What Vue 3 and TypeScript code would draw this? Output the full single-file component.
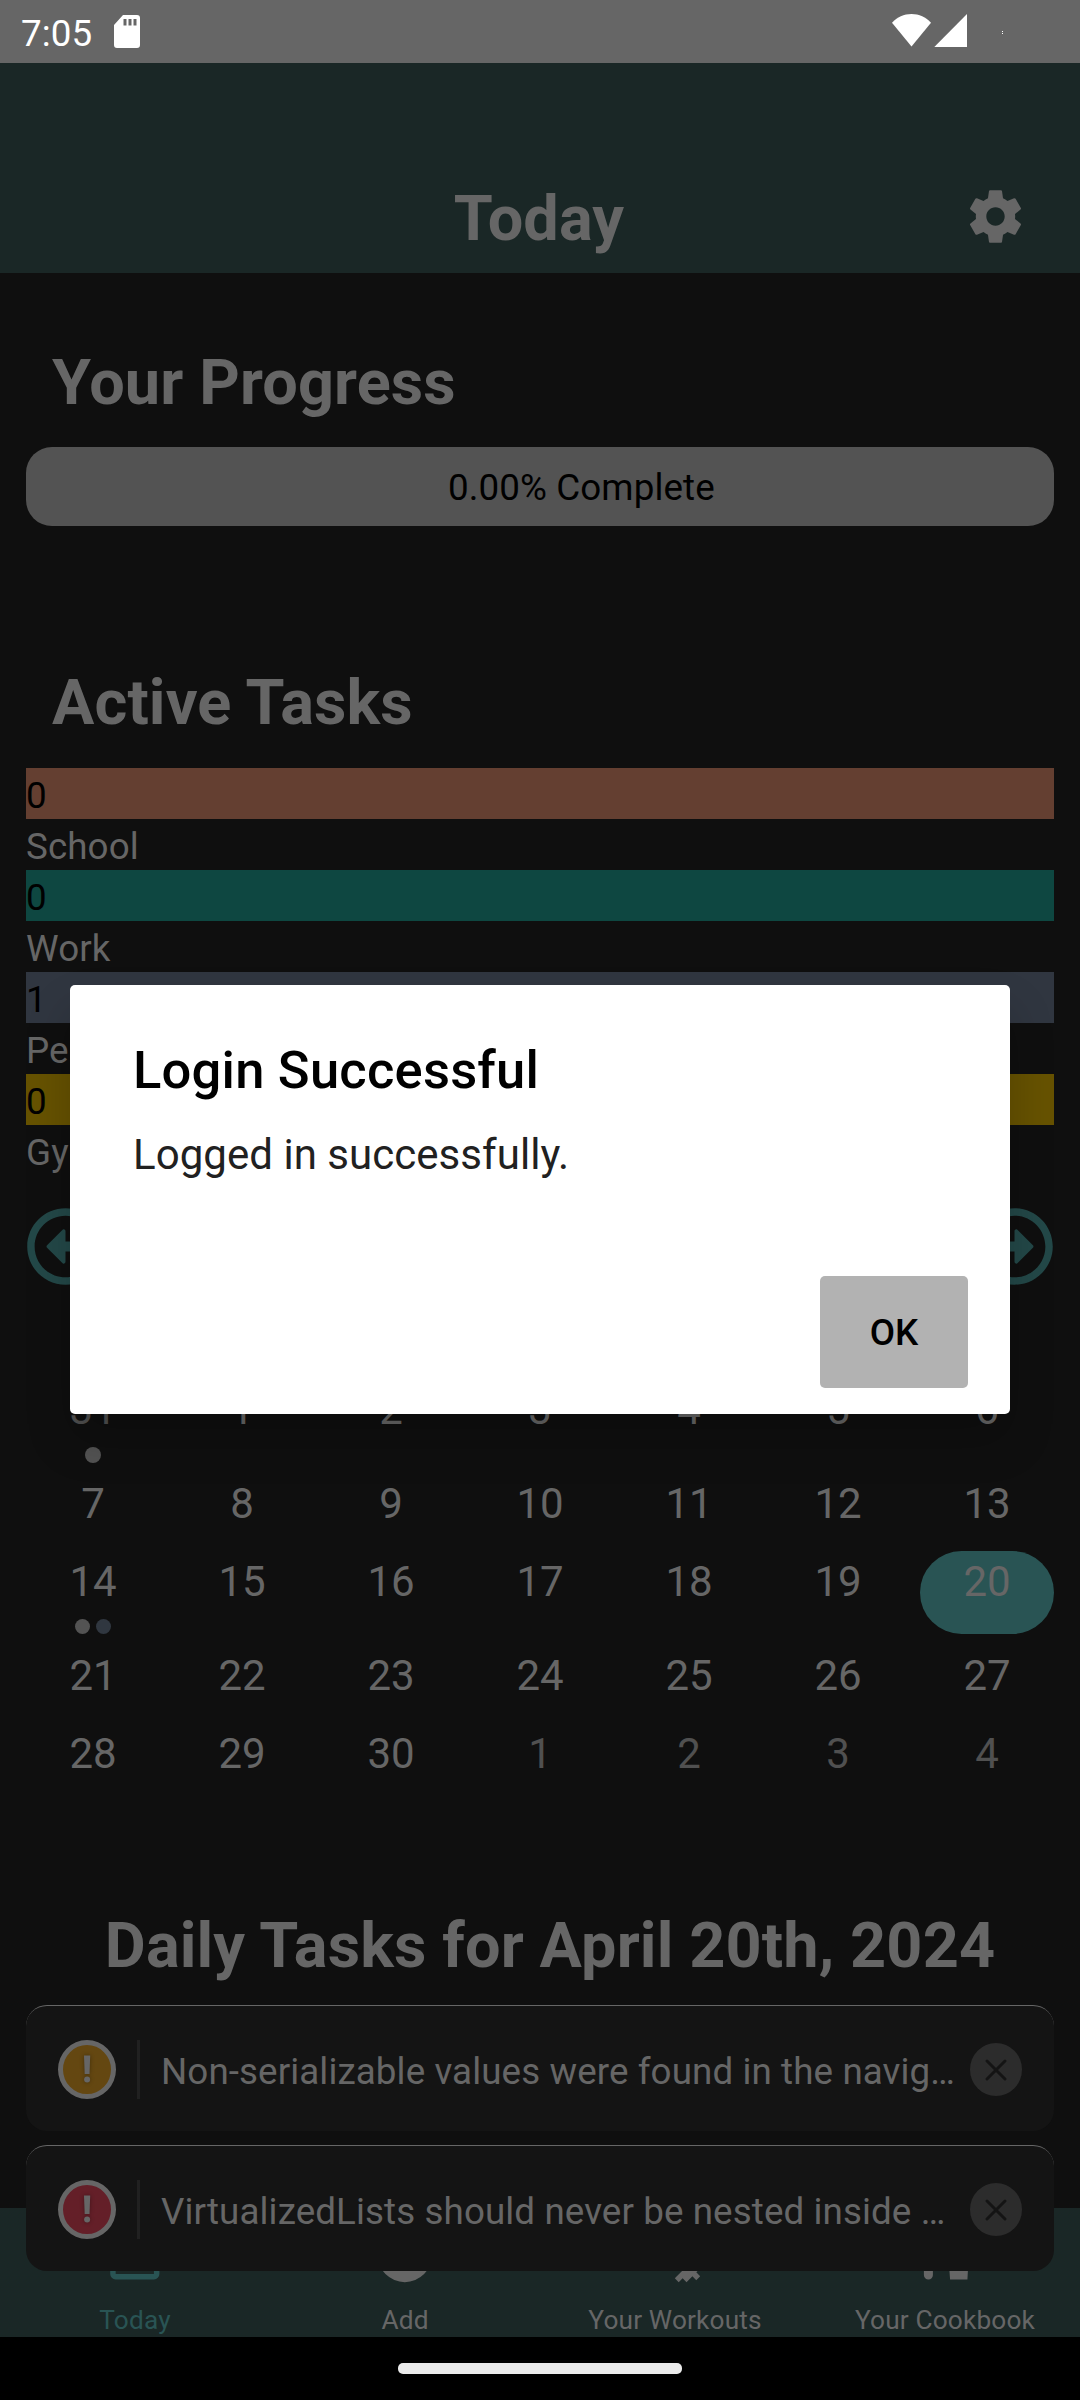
<script setup lang="ts">
interface Category {
  name: string
  count: number
  color: string
}

interface Day {
  label: number
  dots?: string[]
  selected?: boolean
  outside?: boolean
}

interface Toast {
  level: 'warning' | 'error'
  text: string
}

interface Tab {
  label: string
  path: string
  active?: boolean
}

const categories: Category[] = [
  { name: 'School', count: 0, color: '#643f31' },
  { name: 'Work', count: 0, color: '#0e4741' },
  { name: 'Personal', count: 1, color: '#303640' },
  { name: 'Gym', count: 0, color: '#665200' },
]

const range = (from: number, to: number): Day[] =>
  Array.from({ length: to - from + 1 }, (_, i) => ({ label: from + i }))

const grey = '#535353'
const slate = '#303740'

const weeks: Day[][] = [
  [{ label: 31, dots: [grey], outside: true }, ...range(1, 6)],
  range(7, 13),
  [{ label: 14, dots: [grey, slate] }, ...range(15, 19), { label: 20, selected: true }],
  range(21, 27),
  [...range(28, 30), ...range(1, 4).map((d) => ({ ...d, outside: true }))],
]

const toasts: Toast[] = [
  { level: 'warning', text: 'Non-serializable values were found in the navig…' },
  { level: 'error', text: 'VirtualizedLists should never be nested inside …' },
]

const tabs: Tab[] = [
  {
    label: 'Today',
    active: true,
    path: 'M7 10h5v5H7zM19 19H5V8h14zM19 3h-1V1h-2v2H8V1H6v2H5a2 2 0 0 0-2 2v14a2 2 0 0 0 2 2h14a2 2 0 0 0 2-2V5a2 2 0 0 0-2-2z',
  },
  {
    label: 'Add',
    path: 'M17 13h-4v4h-2v-4H7v-2h4V7h2v4h4zM12 2a10 10 0 1 0 0 20 10 10 0 0 0 0-20z',
  },
  {
    label: 'Your Workouts',
    path: 'M20.57 14.86L22 13.43 20.57 12 17 15.57 8.43 7 12 3.43 10.57 2 9.14 3.43 7.71 2 5.57 4.14 4.14 2.71 2.71 4.14l1.43 1.43L2 7.71l1.43 1.43L2 10.57 3.43 12 7 8.43 15.57 17 12 20.57 13.43 22l1.43-1.43L16.29 22l2.14-2.14 1.43 1.43 1.43-1.43-1.43-1.43L22 16.29z',
  },
  {
    label: 'Your Cookbook',
    path: 'M6 3a3 4 0 0 0-1.65 7.3v9.1a1.65 1.65 0 0 0 3.3 0v-9.1A3 4 0 0 0 6 3zM13 8h8l-.72 13h-6.35z',
  },
]

const arrowPath =
  'M8 256c0 137 111 248 248 248s248-111 248-248S393 8 256 8 8 119 8 256zm448 0c0 110.5-89.5 200-200 200S56 366.5 56 256 145.5 56 256 56s200 89.5 200 200zm-72-20v40c0 6.6-5.4 12-12 12H256v67c0 10.7-12.9 16-20.5 8.5l-99-99c-4.7-4.7-4.7-12.3 0-17l99-99c7.6-7.6 20.5-2.2 20.5 8.5v67h116c6.6 0 12 5.4 12 12z'
</script>

<template>
  <div class="screen">
    <div class="status">
      <span class="clock">7:05</span>
      <svg class="sd" width="26" height="33" viewBox="0 0 26 33">
        <path
          fill="#fff"
          fill-rule="evenodd"
          d="M9 0h14a3 3 0 0 1 3 3v27a3 3 0 0 1-3 3H3a3 3 0 0 1-3-3V10zM9.5 4v6.500h3V4zM14.500 4v6.500h3V4zM19.500 4v6.500h3V4z"
        />
      </svg>
      <svg class="signals" width="112" height="33" viewBox="0 0 112 33">
        <path fill="#fff" d="M0 8.800C5 3 12 0 19.500 0S34 3 39 8.800L19.500 32.600z" />
        <path fill="#fff" d="M75 0v33H42.300z" />
        <path fill="#fff" d="M110 17h1v1h-1zM110 19h1v1h-1z" />
      </svg>
    </div>

    <header class="header">
      <h1>Today</h1>
      <svg class="gear" width="63" height="63" viewBox="0 0 24 24">
        <path
          fill="#666"
          d="M19.430 12.980c.04-.32.07-.64.07-.98s-.03-.66-.07-.98l2.110-1.650c.19-.15.24-.42.12-.64l-2-3.460c-.12-.22-.39-.3-.61-.22l-2.490 1c-.52-.4-1.080-.73-1.690-.98l-.38-2.650C14.460 2.180 14.250 2 14 2h-4c-.25 0-.46.18-.49.42l-.38 2.650c-.61.25-1.170.59-1.690.98l-2.490-1c-.23-.09-.49 0-.61.22l-2 3.460c-.13.22-.07.49.12.64l2.110 1.650c-.04.32-.07.65-.07.98s.03.66.07.98l-2.110 1.650c-.19.15-.24.42-.12.64l2 3.460c.12.22.39.3.61.22l2.490-1c.52.4 1.080.73 1.690.98l.38 2.650c.03.24.24.42.49.42h4c.25 0 .46-.18.49-.42l.38-2.650c.61-.25 1.170-.59 1.690-.98l2.490 1c.23.09.49 0 .61-.22l2-3.460c.12-.22.07-.49-.12-.64l-2.110-1.650zM12 15.500c-1.930 0-3.500-1.570-3.500-3.500s1.570-3.500 3.500-3.500 3.500 1.570 3.500 3.500-1.570 3.500-3.500 3.500z"
        />
      </svg>
    </header>

    <main class="content">
      <h2>Your Progress</h2>
      <div class="progress">0.00% Complete</div>

      <h2 class="active-title">Active Tasks</h2>
      <div class="categories">
        <template v-for="c in categories" :key="c.name">
          <div class="line count" :style="{ background: c.color }">{{ c.count }}</div>
          <div class="line name">{{ c.name }}</div>
        </template>
      </div>

      <div class="month">
        <svg width="79" height="79" viewBox="0 0 512 512"><path :d="arrowPath" fill="#234848" /></svg>
        <svg class="flip" width="79" height="79" viewBox="0 0 512 512"><path :d="arrowPath" fill="#234848" /></svg>
      </div>

      <div class="calendar">
        <div v-for="(week, w) in weeks" :key="w" class="week">
          <div
            v-for="day in week"
            :key="day.label"
            class="day"
            :class="{ selected: day.selected, outside: day.outside }"
          >
            <span>{{ day.label }}</span>
            <div v-if="day.dots" class="dots">
              <i v-for="dot in day.dots" :key="dot" :style="{ background: dot }"></i>
            </div>
          </div>
        </div>
      </div>

      <h2 class="daily-title">Daily Tasks for April 20th, 2024</h2>
    </main>

    <nav class="tabs">
      <div v-for="tab in tabs" :key="tab.label" class="tab" :class="{ on: tab.active }">
        <svg width="65.600" height="65.600" viewBox="0 0 24 24">
          <path :d="tab.path" fill="currentColor" fill-rule="evenodd" />
        </svg>
        <span>{{ tab.label }}</span>
      </div>
    </nav>
    <div class="gesture"><div class="handle"></div></div>

    <div class="toasts">
      <div v-for="t in toasts" :key="t.level" class="toast">
        <div class="badge" :class="t.level">
          <svg width="48" height="49" viewBox="0 0 48 49">
            <path fill="#666" d="M21 10.500h6.200l-.7 18.500h-4.800z" />
            <circle cx="24.100" cy="34.600" r="3" fill="#666" />
          </svg>
        </div>
        <div class="rule"></div>
        <div class="message">{{ t.text }}</div>
        <div class="close">
          <svg width="24" height="24" viewBox="0 0 24 24">
            <path d="M3 3l18 18M21 3L3 21" stroke="#141414" stroke-width="3" stroke-linecap="round" />
          </svg>
        </div>
      </div>
    </div>

    <div class="overlay">
      <div class="dialog" role="dialog">
        <div class="dialog-title">Login Successful</div>
        <div class="dialog-text">Logged in successfully.</div>
        <div class="actions"><button type="button">OK</button></div>
      </div>
    </div>
  </div>
</template>

<style>
body {
  background: #0f0f0f;
}
</style>

<style scoped>
.screen {
  position: relative;
  display: flex;
  flex-direction: column;
  width: 1080px;
  height: 2400px;
  overflow: hidden;
  background: #0f0f0f;
  color: #666;
  font-family: Roboto, 'Liberation Sans', sans-serif;
  font-size: 36.75px;
  letter-spacing: 0.1px;
}
.screen * {
  box-sizing: border-box;
}
svg {
  display: block;
  flex: none;
}
h1,
h2 {
  margin: 0;
  font-size: 63px;
  font-weight: 700;
  letter-spacing: 0.13px;
  line-height: 74px;
  white-space: nowrap;
}
.status {
  display: flex;
  flex: none;
  align-items: flex-start;
  height: 63px;
  padding: 0 76px 0 21px;
  background: #666;
  color: #fff;
}
.clock {
  width: 93px;
  line-height: 67px;
}
.sd {
  margin-top: 15px;
}
.signals {
  margin: 14px 0 0 auto;
}
.header {
  display: grid;
  grid-template-columns: 1fr auto 1fr;
  flex: none;
  height: 210px;
  padding: 0 53px;
  background: #1a2726;
}
.header h1 {
  grid-column: 2;
  margin: 119px 2px 0 0;
}
.gear {
  justify-self: end;
  margin-top: 122px;
}
.content {
  flex: none;
  height: 1935px;
  padding: 73px 26px 0;
}
.content h2 {
  padding-left: 26px;
}
.progress {
  height: 79px;
  margin-top: 27px;
  padding-left: 422px;
  border-radius: 26px;
  background: #535353;
  color: #000;
  line-height: 81px;
}
.content .active-title {
  margin-top: 140px;
}
.categories {
  margin-top: 28px;
}
.line {
  height: 51px;
  line-height: 55px;
}
.count {
  color: #000;
}
.month {
  display: flex;
  justify-content: space-between;
  margin-top: 31px;
}
.flip {
  transform: scaleX(-1);
}
.calendar {
  display: flex;
  flex-direction: column;
  gap: 11px;
  height: 422px;
  margin-top: 93px;
}
.week {
  display: flex;
  justify-content: space-between;
}
.day {
  width: 134px;
  min-height: 67px;
  font-size: 42px;
  letter-spacing: 0;
  line-height: 61px;
  text-align: center;
}
.day span {
  display: block;
  height: 67px;
}
.outside {
  color: #505050;
}
.selected {
  border-radius: 42px;
  background: #295454;
}
.dots {
  display: flex;
  align-items: flex-end;
  justify-content: center;
  gap: 6px;
  height: 16px;
}
.dots i {
  width: 15px;
  height: 15px;
  border-radius: 50%;
}
.dots i:only-child {
  width: 16px;
  height: 16px;
  transform: translateY(1px);
}
.content .daily-title {
  margin-top: 108px;
  padding: 0 0 0 20px;
  text-align: center;
}
.tabs {
  display: flex;
  flex: none;
  height: 129px;
  background: #1a2726;
}
.tab {
  display: flex;
  flex: 1 1 0;
  flex-direction: column;
  align-items: center;
  padding-top: 13.6px;
  font-size: 26.25px;
  letter-spacing: 0.15px;
}
.tab span {
  margin-top: 17px;
  line-height: 32px;
}
.tab.on {
  color: #295454;
}
.gesture {
  display: flex;
  flex: 1;
  justify-content: center;
  padding-top: 26px;
  background: #000;
}
.handle {
  width: 284px;
  height: 11px;
  border-radius: 5px;
  background: #ebebeb;
}
.toasts {
  position: absolute;
  right: 26px;
  bottom: 129px;
  left: 26px;
  display: flex;
  flex-direction: column;
  gap: 14px;
}
.toast {
  display: flex;
  align-items: center;
  height: 126px;
  padding: 2px 32px 0;
  border-top: 1px solid #666;
  border-radius: 21px;
  background: #141414;
}
.badge {
  flex: none;
  width: 58px;
  height: 59px;
  border: 5px solid #666;
  border-radius: 50%;
}
.badge svg {
  filter: drop-shadow(0 0 2px rgba(0, 0, 0, 0.35));
}
.warning {
  background: #644711;
}
.error {
  background: #641f28;
}
.rule {
  width: 3px;
  height: 59px;
  margin: 0 21px;
  background: #212121;
}
.message {
  flex: 1;
  line-height: 51px;
  padding-top: 4px;
  white-space: nowrap;
}
.close {
  display: flex;
  align-items: center;
  justify-content: center;
  width: 52px;
  height: 53px;
  border-radius: 50%;
  background: #2c2c2c;
}
.overlay {
  position: absolute;
  inset: 0;
  display: flex;
  align-items: center;
  justify-content: center;
  padding-bottom: 1px;
}
.dialog {
  display: flex;
  flex-direction: column;
  width: 940px;
  height: 429px;
  padding: 50px 42px 26px 63px;
  border-radius: 5px;
  background: #fff;
  box-shadow: 0 26px 46px rgba(0, 0, 0, 0.2);
  color: #000;
}
.dialog-title {
  font-size: 52.5px;
  font-weight: 500;
  letter-spacing: 0.22px;
  line-height: 70px;
}
.dialog-text {
  margin-top: 22px;
  color: #212121;
  font-size: 42px;
  letter-spacing: 0.04px;
  line-height: 56px;
}
.actions {
  display: flex;
  justify-content: flex-end;
  margin-top: auto;
}
button {
  width: 148px;
  height: 112px;
  padding: 2px 0 0;
  border: 0;
  border-radius: 5px;
  background: #b2b2b2;
  color: #000;
  font: 500 36.75px/110px Roboto, 'Liberation Sans', sans-serif;
}
</style>
